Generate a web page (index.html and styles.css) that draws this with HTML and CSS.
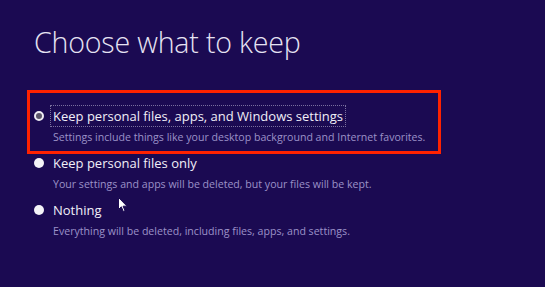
FILE: index.html
```html
<!DOCTYPE html>
<html lang="en">
<head>
<meta charset="utf-8">
<title>Choose what to keep</title>
<link rel="stylesheet" href="styles.css">
</head>
<body>
<main class="page">
  <h1 class="title">Choose what to keep</h1>
  <div class="options">
    <div class="option selected">
      <span class="radio radio-focus"></span>
      <div class="text">
        <div class="label"><span class="focus">Keep personal files, apps, and Windows settings</span></div>
        <div class="desc">Settings include things like your desktop background and Internet favorites.</div>
      </div>
    </div>
    <div class="option">
      <span class="radio"></span>
      <div class="text">
        <div class="label">Keep personal files only</div>
        <div class="desc">Your settings and apps will be deleted, but your files will be kept.</div>
      </div>
    </div>
    <div class="option">
      <span class="radio"></span>
      <div class="text">
        <div class="label">Nothing</div>
        <div class="desc">Everything will be deleted, including files, apps, and settings.</div>
      </div>
    </div>
  </div>
  <svg class="cursor" width="10" height="16" viewBox="0 0 10 16" aria-hidden="true">
    <path d="M0.5 0.5 L0.5 12.5 L3.3 9.8 L5.3 14.5 L7 13.8 L5.1 9.2 L9 9.2 Z" fill="#ffffff" stroke="#1b0a52" stroke-width="1"/>
  </svg>
</main>
</body>
</html>
```
FILE: styles.css
```css
html, body {
  margin: 0;
  padding: 0;
  background: #1b0a52;
}
body {
  width: 545px;
  height: 287px;
  overflow: hidden;
  font-family: "Open Sans", "Noto Sans", sans-serif;
}
.page {
  position: relative;
  padding: 22px 0 0 34px;
}
.title {
  margin: 0;
  font-weight: 300;
  font-size: 28.6px;
  line-height: 40px;
  color: #e6e3f3;
  letter-spacing: -0.2px;
}
.options {
  margin-top: 44px;
  display: flex;
  flex-direction: column;
}
.option {
  position: relative;
  display: grid;
  grid-template-columns: 19px 1fr;
  padding-bottom: 8px;
}
.option.selected::before {
  content: "";
  position: absolute;
  left: -7px;
  top: -16px;
  width: 414px;
  height: 64px;
  box-sizing: border-box;
  border: 3px solid #ff2200;
}
.radio {
  width: 10px;
  height: 10px;
  margin-top: 5px;
  border-radius: 50%;
  background: #f4f3f8;
  box-sizing: border-box;
}
.radio-focus {
  background: #5b5669;
  border: 2px solid #efedf4;
}
.label {
  font-size: 13px;
  line-height: 20px;
  color: #f1eff8;
}
.focus {
  outline: 1px dotted rgba(200, 196, 220, 0.55);
  outline-offset: 1px;
  padding: 0 1px;
  margin-left: -1px;
}
.desc {
  margin-top: 3px;
  font-size: 10.6px;
  line-height: 16px;
  color: #9b92c8;
}
.cursor {
  position: absolute;
  left: 118px;
  top: 197px;
}
```
